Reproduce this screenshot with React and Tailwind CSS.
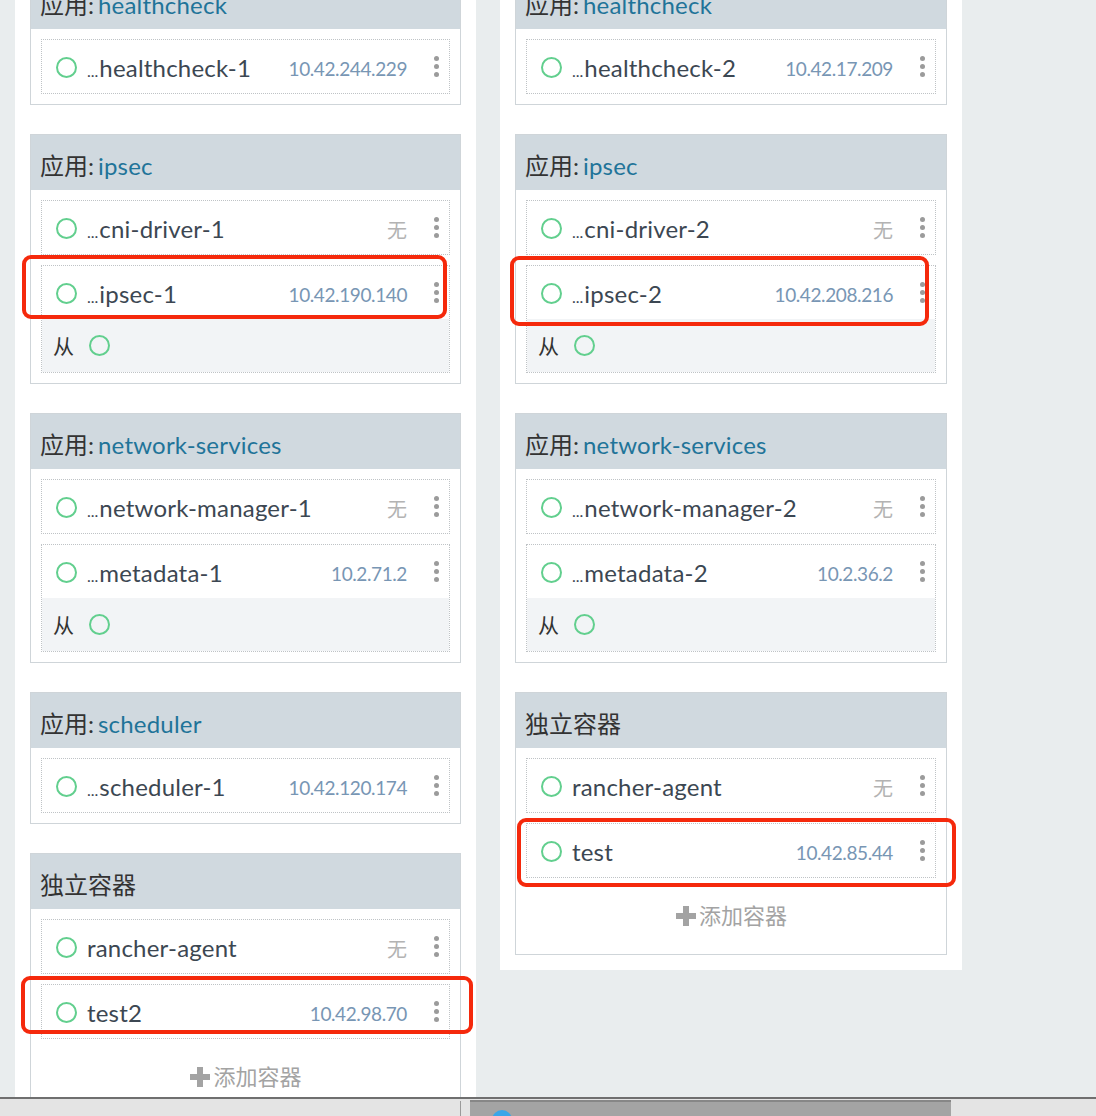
import React from "react";

const FONT = { fontFamily: 'Lato, "Noto Sans CJK SC", "Noto Sans", sans-serif' };

const leftCol = [
  { title: "healthcheck", rows: [{ name: "healthcheck-1", ip: "10.42.244.229" }] },
  {
    title: "ipsec",
    rows: [
      { name: "cni-driver-1" },
      { name: "ipsec-1", ip: "10.42.190.140", sidekick: true },
    ],
  },
  {
    title: "network-services",
    rows: [
      { name: "network-manager-1" },
      { name: "metadata-1", ip: "10.2.71.2", sidekick: true },
    ],
  },
  { title: "scheduler", rows: [{ name: "scheduler-1", ip: "10.42.120.174" }] },
  {
    standalone: true,
    rows: [
      { name: "rancher-agent", full: true },
      { name: "test2", ip: "10.42.98.70", full: true },
    ],
  },
];

const rightCol = [
  { title: "healthcheck", rows: [{ name: "healthcheck-2", ip: "10.42.17.209" }] },
  {
    title: "ipsec",
    rows: [
      { name: "cni-driver-2" },
      { name: "ipsec-2", ip: "10.42.208.216", sidekick: true },
    ],
  },
  {
    title: "network-services",
    rows: [
      { name: "network-manager-2" },
      { name: "metadata-2", ip: "10.2.36.2", sidekick: true },
    ],
  },
  {
    standalone: true,
    rows: [
      { name: "rancher-agent", full: true },
      { name: "test", ip: "10.42.85.44", full: true },
    ],
  },
];

function Ring({ className = "" }) {
  return <span className={"block w-[21px] h-[21px] shrink-0 rounded-full border-2 border-[#62cf8e] " + className} />;
}

function Kebab() {
  return (
    <div className="w-[8px] flex flex-col items-center gap-[3px]">
      <span className="w-[5px] h-[5px] rounded-full bg-[#9b9b9b]" />
      <span className="w-[5px] h-[5px] rounded-full bg-[#9b9b9b]" />
      <span className="w-[5px] h-[5px] rounded-full bg-[#9b9b9b]" />
    </div>
  );
}

function ContainerBox({ row }) {
  return (
    <div className="border border-dotted border-[#bfc3c6]">
      <div className="h-[53px] flex items-center pl-[14px] pr-[9px] bg-white">
        <Ring className="mt-[2px]" />
        <div className="flex-1 ml-[10px] flex items-baseline text-[#3c4752] text-[24px] leading-none whitespace-nowrap pt-[2px]">
          {!row.full && <span className="text-[16px] mr-[1px]">...</span>}
          <span className="tracking-[0.2px]">{row.name}</span>
        </div>
        {row.ip ? (
          <span className="text-[19px] text-[#7896b4] tracking-[-0.4px] leading-none pt-[4px]">{row.ip}</span>
        ) : (
          <span className="text-[20px] text-[#b3b3b3] leading-none pt-[5px]">无</span>
        )}
        <div className="ml-[25px]">
          <Kebab />
        </div>
      </div>
      {row.sidekick && (
        <div className="h-[53px] flex items-center gap-[15px] pl-[11px] bg-[#f2f4f6]">
          <span className="text-[21px] text-[#333] leading-none">从</span>
          <Ring />
        </div>
      )}
    </div>
  );
}

function Card({ card }) {
  return (
    <div className="border border-[#cfd5d9] bg-white">
      <div className="h-[55px] bg-[#d0d9df] flex items-center pl-[9px] pt-[6px] text-[24px] leading-none whitespace-nowrap">
        {card.standalone ? (
          <span className="text-[#333]">独立容器</span>
        ) : (
          <>
            <span className="text-[#333]">应用:</span>
            <span className="text-[#1f7499] ml-[4px] tracking-[0.2px]">{card.title}</span>
          </>
        )}
      </div>
      <div className="flex flex-col gap-[10px] px-[10px] py-[10px]">
        {card.rows.map((r) => (
          <ContainerBox key={r.name} row={r} />
        ))}
        {card.standalone && (
          <div className="h-[56px] flex items-center justify-center gap-[2px] text-[#a3a3a3] text-[22px] leading-none">
            <svg width="22" height="22" viewBox="0 0 22 22">
              <rect x="8" y="1" width="6" height="20" fill="#a3a3a3" />
              <rect x="1" y="8" width="20" height="6" fill="#a3a3a3" />
            </svg>
            <span>添加容器</span>
          </div>
        )}
      </div>
    </div>
  );
}

function Column({ cards, className }) {
  return (
    <div className={"w-[461px] bg-white px-[15px] " + className}>
      <div className="flex flex-col gap-[29px] -mt-[27px]">
        {cards.map((c, i) => (
          <Card key={i} card={c} />
        ))}
      </div>
    </div>
  );
}

const marks = [
  "left-[22px] top-[255px] w-[425px] h-[64px]",
  "left-[510px] top-[256px] w-[419px] h-[70px]",
  "left-[517px] top-[818px] w-[439px] h-[69px]",
  "left-[21px] top-[976px] w-[452px] h-[58px]",
];

export default function App() {
  return (
    <div className="relative w-[1096px] h-[1116px] overflow-hidden bg-[#e9edee]" style={FONT}>
      <div className="h-[1097px] overflow-hidden flex items-start gap-[24px] pl-[15px]">
        <Column cards={leftCol} className="self-stretch" />
        <Column cards={rightCol} className="pb-[15px] w-[462px]" />
      </div>

      {/* bottom taskbar strip */}
      <div className="h-[19px] border-t-2 border-[#6f6f6f] bg-[#e4e4e4] flex items-stretch">
        <div className="w-[461px] border-r border-[#9a9a9a] mt-[2px]" />
        <div className="ml-[9px] w-[481px] mt-[1px] bg-[#a4a4a4] border-t-2 border-[#878787] pl-[22px] pt-[8px]">
          <span className="block w-[20px] h-[20px] rounded-full bg-[#3aa6e8]" />
        </div>
      </div>

      {/* red annotation boxes */}
      {marks.map((m) => (
        <div key={m} className={"absolute rounded-[9px] border-[4px] border-[#f5290c] " + m} />
      ))}
    </div>
  );
}
